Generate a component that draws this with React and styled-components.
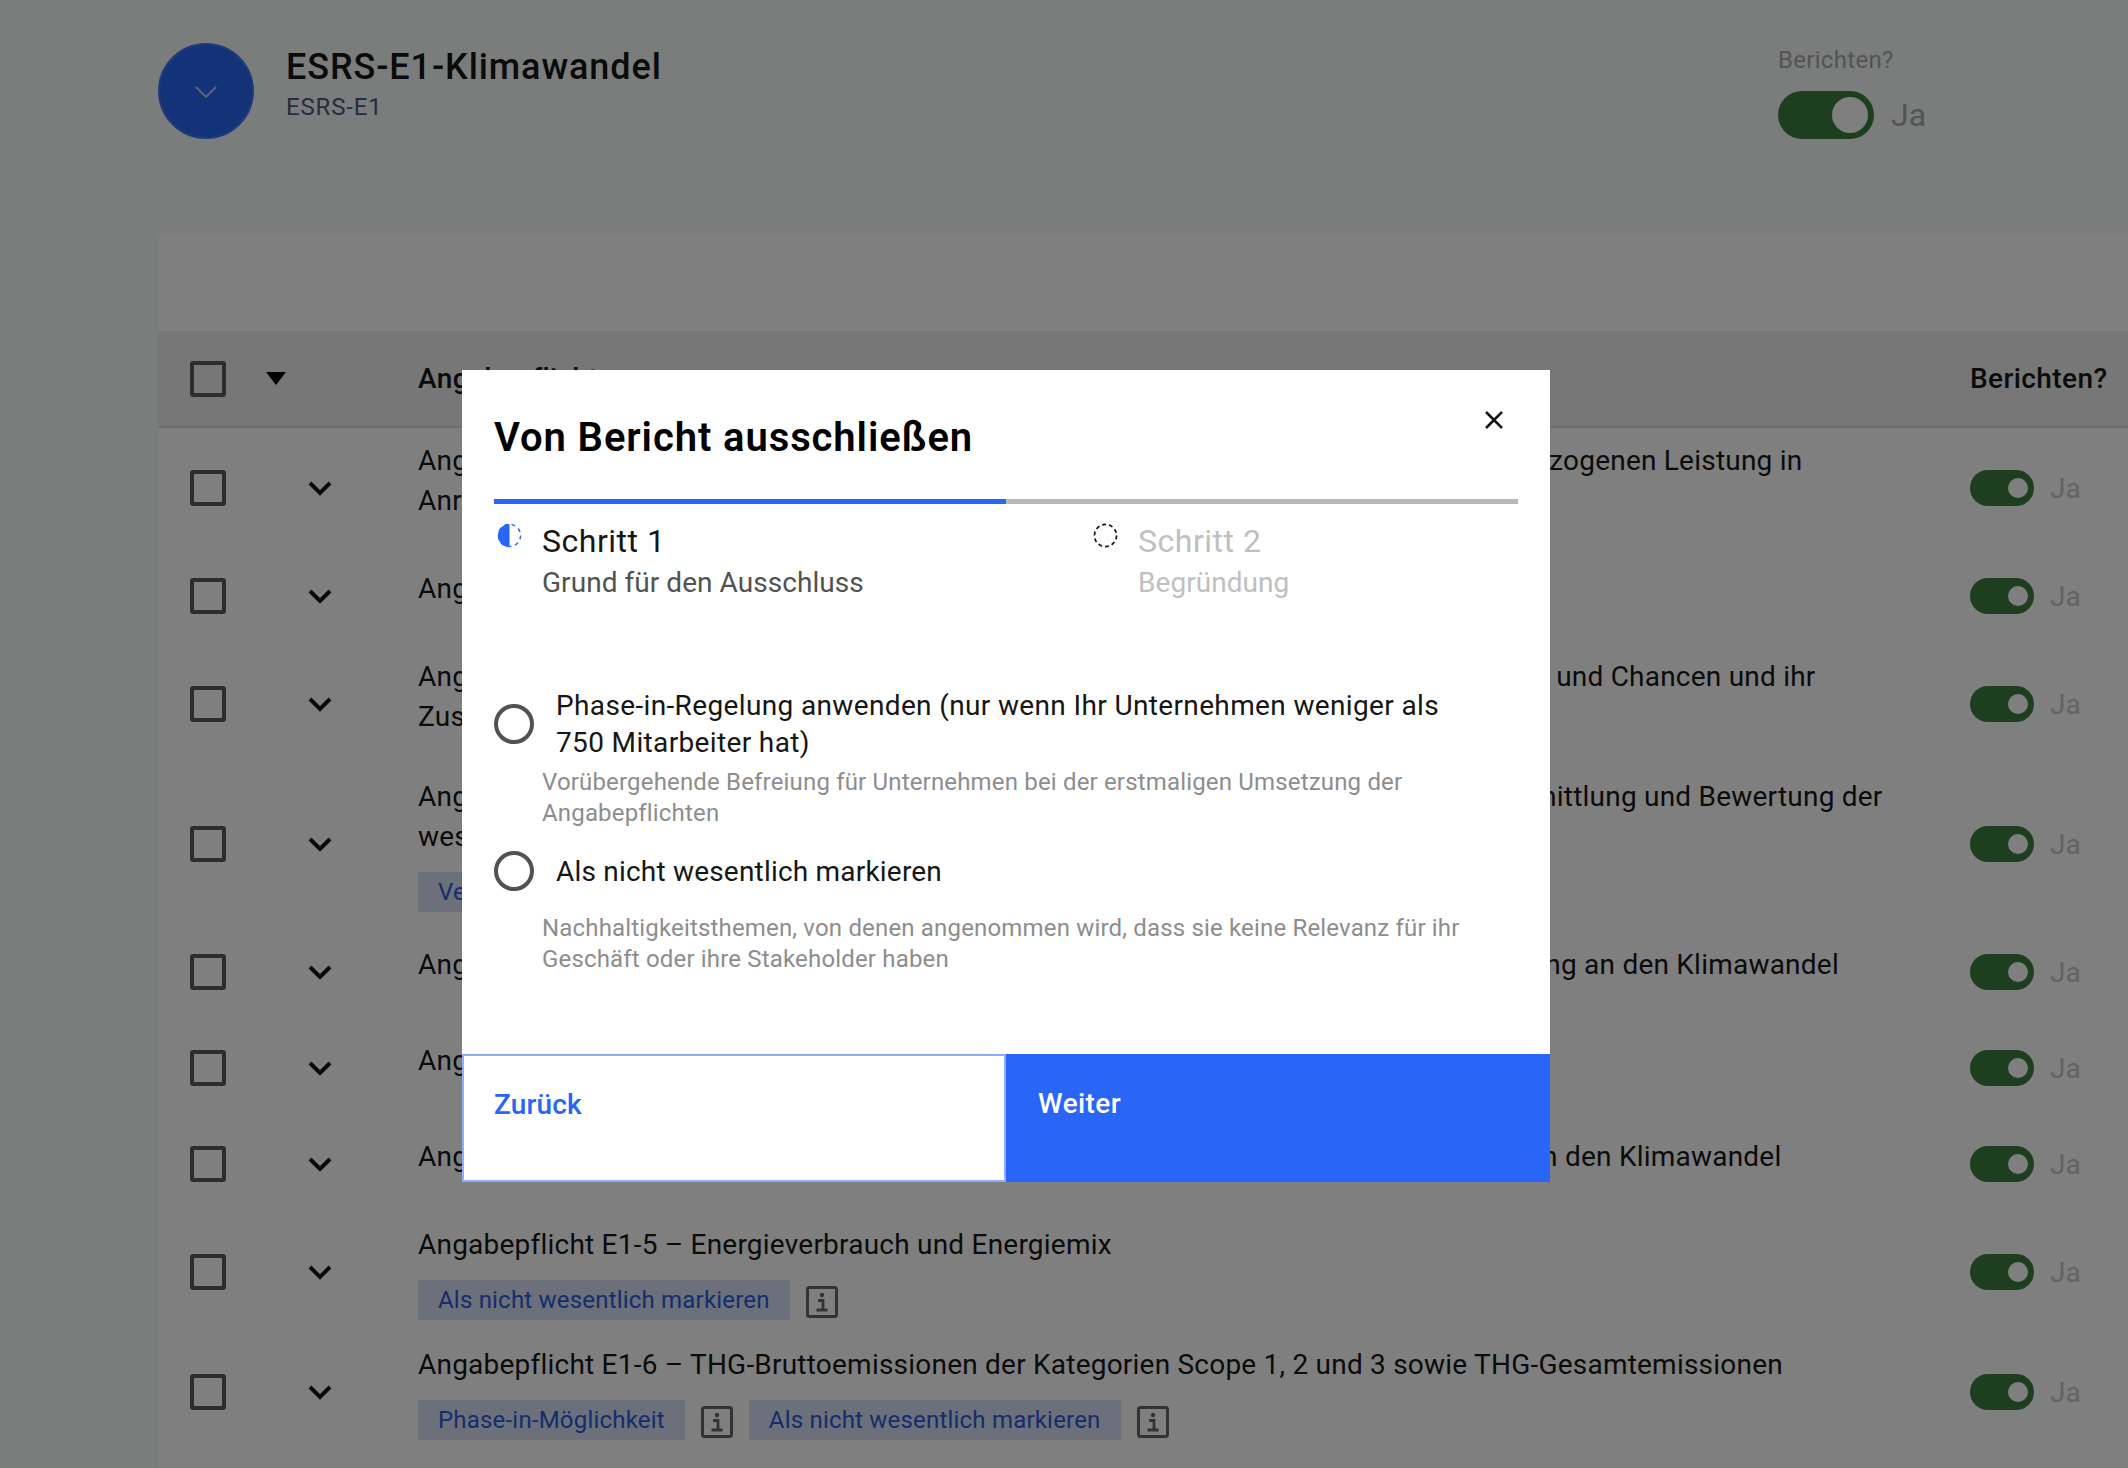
import React from "react"
import styled, { createGlobalStyle } from "styled-components"

const rows = [
  {
    lines: [
      "Angabepflicht im Zusammenhang mit dem ESRS 2 GOV-3 – Berücksichtigung der klimabezogenen Leistung in",
      "Anreizsysteme",
    ],
  },
  { lines: ["Angabepflicht E1-1 – Übergangsplan für den Klimaschutz"] },
  {
    lines: [
      "Angabepflicht im Zusammenhang mit ESRS 2 SBM-3 - Wesentliche Auswirkungen, Risiken und Chancen und ihr",
      "Zusammenspiel mit Strategie und Geschäftsmodell",
    ],
  },
  {
    lines: [
      "Angabepflicht im Zusammenhang mit ESRS 2 IRO-1 – Beschreibung der Verfahren zur Ermittlung und Bewertung der",
      "wesentlichen klimabezogenen Auswirkungen, Risiken und Chancen",
    ],
    tags: ["Verpflichtend"],
  },
  {
    lines: [
      "Angabepflicht E1-2 - Konzepte im Zusammenhang mit dem Klimaschutz und der Anpassung an den Klimawandel",
    ],
  },
  { lines: ["Angabepflicht E1-3 – Maßnahmen und Mittel im Zusammenhang mit den Klimastrategien"] },
  {
    lines: [
      "Angabepflicht E1-4 - Ziele im Zusammenhang mit dem Klimaschutz und der Anpassung an den Klimawandel",
    ],
  },
  {
    lines: ["Angabepflicht E1-5 – Energieverbrauch und Energiemix"],
    tags: ["Als nicht wesentlich markieren"],
  },
  {
    lines: [
      "Angabepflicht E1-6 – THG-Bruttoemissionen der Kategorien Scope 1, 2 und 3 sowie THG-Gesamtemissionen",
    ],
    tags: ["Phase-in-Möglichkeit", "Als nicht wesentlich markieren"],
  },
]

const Chevron = () => (
  <svg width="24" height="15" viewBox="0 0 24 15" fill="none">
    <path d="M2 2l10 10L22 2" stroke="#161616" strokeWidth="4" />
  </svg>
)

const InfoIcon = () => (
  <InfoSvg width="32" height="32" viewBox="0 0 32 32" fill="none">
    <rect x="1.500" y="1.500" width="29" height="29" rx="2" stroke="#666" strokeWidth="3" />
    <circle cx="16" cy="9" r="2.200" fill="#666" />
    <path d="M12 14.500h5V24M10.500 24h11" stroke="#666" strokeWidth="2.800" />
  </InfoSvg>
)

const Toggle = ({ large }) => (
  <ToggleWrap $large={large}>
    <Track $large={large}>
      <Knob $large={large} />
    </Track>
    <ToggleLabel $large={large}>Ja</ToggleLabel>
  </ToggleWrap>
)

const Row = ({ row }) => (
  <TableRow>
    <Checkbox />
    <ChevronCell>
      <Chevron />
    </ChevronCell>
    <TitleCell>
      <RowTitle>
        {row.lines.map(line => (
          <div key={line}>{line}</div>
        ))}
      </RowTitle>
      {row.tags && (
        <Tags>
          {row.tags.map(tag => (
            <React.Fragment key={tag}>
              <Tag>{tag}</Tag>
              {tag !== "Verpflichtend" && <InfoIcon />}
            </React.Fragment>
          ))}
        </Tags>
      )}
    </TitleCell>
    <Toggle />
  </TableRow>
)

const App = () => {
  return (
    <>
      <GlobalStyle />
      <Page>
        <TopBar>
          <Circle>
            <svg width="22" height="12" viewBox="0 0 22 12" fill="none">
              <path d="M1 1l10 10L21 1" stroke="#fff" strokeWidth="2" />
            </svg>
          </Circle>
          <TopText>
            <PageTitle>ESRS-E1-Klimawandel</PageTitle>
            <PageSub>ESRS-E1</PageSub>
          </TopText>
          <ReportBox>
            <ReportLabel>Berichten?</ReportLabel>
            <Toggle large />
          </ReportBox>
        </TopBar>

        <Panel>
          <Toolbar />
          <HeadRow>
            <Checkbox />
            <Caret />
            <HeadText>Angabepflicht</HeadText>
            <HeadText>Berichten?</HeadText>
          </HeadRow>
          {rows.map(row => (
            <Row key={row.lines[0]} row={row} />
          ))}
        </Panel>
      </Page>

      <Overlay>
        <Modal>
          <CloseButton>
            <svg width="20" height="20" viewBox="0 0 20 20" fill="none">
              <path d="M2 2l16 16M18 2L2 18" stroke="#161616" strokeWidth="2.500" />
            </svg>
          </CloseButton>
          <ModalTitle>Von Bericht ausschließen</ModalTitle>

          <Progress>
            <Step>
              <svg width="25" height="25" viewBox="0 0 26 26" fill="none">
                <path d="M13 1a12 12 0 0 0 0 24z" fill="#2965f7" />
                <circle cx="13" cy="13" r="11.500" stroke="#2965f7" strokeWidth="1.500" strokeDasharray="4 4" />
              </svg>
              <StepText>
                <StepName>Schritt 1</StepName>
                <StepSub>Grund für den Ausschluss</StepSub>
              </StepText>
            </Step>
            <Step>
              <svg width="25" height="25" viewBox="0 0 26 26" fill="none">
                <circle cx="13" cy="13" r="11.500" stroke="#161616" strokeWidth="1.800" strokeDasharray="4 3.200" />
              </svg>
              <StepText>
                <StepName $muted>Schritt 2</StepName>
                <StepSub $muted>Begründung</StepSub>
              </StepText>
            </Step>
          </Progress>

          <Options>
            <Option>
              <Radio />
              <OptionLabel>
                Phase-in-Regelung anwenden (nur wenn Ihr Unternehmen weniger als
                <br />
                750 Mitarbeiter hat)
              </OptionLabel>
            </Option>
            <OptionHelp>
              Vorübergehende Befreiung für Unternehmen bei der erstmaligen Umsetzung der
              <br />
              Angabepflichten
            </OptionHelp>
            <Option $second>
              <Radio />
              <OptionLabel $second>Als nicht wesentlich markieren</OptionLabel>
            </Option>
            <OptionHelp $second>
              Nachhaltigkeitsthemen, von denen angenommen wird, dass sie keine Relevanz für ihr
              <br />
              Geschäft oder ihre Stakeholder haben
            </OptionHelp>
          </Options>

          <Footer>
            <BackButton>Zurück</BackButton>
            <NextButton>Weiter</NextButton>
          </Footer>
        </Modal>
      </Overlay>
    </>
  )
}

const GlobalStyle = createGlobalStyle`
  html, body {
    margin: 0;
    height: 100%;
    overflow: hidden;
    background: #f6faf8;
    font-family: "Roboto", "Liberation Sans", sans-serif;
    color: #161616;
  }
  * {
    box-sizing: border-box;
  }
`

const Page = styled.main`
  display: flex;
  flex-direction: column;
  height: 1468px;
  overflow: hidden;
  padding-left: 158px;
`

const TopBar = styled.header`
  display: flex;
  flex: none;
  height: 235px;
  padding-top: 43px;
`

const Circle = styled.div`
  width: 96px;
  height: 96px;
  border-radius: 50%;
  background: #2864f0;
  border: 2px solid #3f78f5;
  display: flex;
  align-items: center;
  justify-content: center;
  svg {
    opacity: 0.65;
    margin-top: 2px;
  }
`

const TopText = styled.div`
  margin-left: 32px;
  padding-top: 2px;
`

const PageTitle = styled.h1`
  margin: 0;
  font-size: 36px;
  line-height: 44px;
  font-weight: 500;
  letter-spacing: 0.9px;
`

const PageSub = styled.div`
  margin-top: 2px;
  font-size: 24px;
  line-height: 32px;
  color: #4d5a7a;
  letter-spacing: 0.85px;
`

const ReportBox = styled.div`
  width: 200px;
  margin-left: auto;
  margin-right: 150px;
  margin-top: 1px;
`

const ReportLabel = styled.div`
  font-size: 24px;
  line-height: 32px;
  color: #a8a8a8;
  margin-bottom: 15px;
  letter-spacing: 0.3px;
`

const ToggleWrap = styled.div`
  display: flex;
  align-items: center;
  gap: ${p => (p.$large ? "17px" : "16px")};
`

const Track = styled.div`
  position: relative;
  width: ${p => (p.$large ? "96px" : "64px")};
  height: ${p => (p.$large ? "48px" : "36px")};
  border-radius: 24px;
  background: #3c7d40;
`

const Knob = styled.div`
  position: absolute;
  right: 6px;
  top: ${p => (p.$large ? "6px" : "8px")};
  width: ${p => (p.$large ? "36px" : "20px")};
  height: ${p => (p.$large ? "36px" : "20px")};
  border-radius: 50%;
  background: #fff;
`

const ToggleLabel = styled.span`
  font-size: ${p => (p.$large ? "32px" : "28px")};
  color: ${p => (p.$large ? "#a8a8a8" : "#c6c6c6")};
`

const Panel = styled.section`
  flex: 1;
  background: #fff;
`

const Toolbar = styled.div`
  height: 96px;
`

const HeadRow = styled.div`
  display: grid;
  grid-template-columns: 36px 40px 1fr 158px;
  align-items: center;
  height: 97px;
  padding-left: 32px;
  background: #eeeeee;
  border-bottom: 2px solid #d8d8d8;
  & > :nth-child(3) {
    margin-left: 152px;
  }
`

const Caret = styled.div`
  margin-left: 40px;
  width: 0;
  height: 0;
  border-left: 10px solid transparent;
  border-right: 10px solid transparent;
  border-top: 13px solid #000;
`

const HeadText = styled.div`
  font-size: 28px;
  font-weight: 500;
  letter-spacing: 0.4px;
  white-space: nowrap;
`

const TableRow = styled.div`
  display: grid;
  grid-template-columns: 36px 82px 1fr 158px;
  align-items: center;
  padding: 13px 0 13px 32px;
  min-height: 96px;
`

const Checkbox = styled.div`
  width: 36px;
  height: 36px;
  border: 4px solid #5a5a5a;
  border-radius: 3px;
`

const ChevronCell = styled.div`
  display: flex;
  justify-content: flex-end;
  width: 106px;
  margin-right: -24px;
`

const TitleCell = styled.div`
  padding-left: 110px;
`

const RowTitle = styled.div`
  font-size: 28px;
  line-height: 40px;
  white-space: nowrap;
  margin-bottom: 14px;
  letter-spacing: 0.22px;
`

const Tags = styled.div`
  display: flex;
  align-items: center;
  gap: 16px;
  margin: 15px 0 -1px;
`

const Tag = styled.span`
  height: 40px;
  padding: 0 20px;
  background: #d6e0f5;
  color: #2a5ad8;
  font-size: 24px;
  line-height: 40px;
  white-space: nowrap;
  letter-spacing: 0.2px;
`

const InfoSvg = styled.svg`
  margin-top: 4px;
`

const Overlay = styled.div`
  position: fixed;
  inset: 0;
  background: rgba(0, 0, 0, 0.5);
  padding: 370px 0 0 462px;
`

const Modal = styled.div`
  position: relative;
  width: 1088px;
  height: 812px;
  background: #fff;
  padding-top: 44px;
  display: flex;
  flex-direction: column;
`

const CloseButton = styled.div`
  position: absolute;
  top: 40px;
  right: 46px;
  line-height: 0;
`

const ModalTitle = styled.h2`
  margin: 0 32px;
  font-size: 40px;
  line-height: 48px;
  font-weight: 600;
  letter-spacing: 0.9px;
  color: #000;
`

const Progress = styled.div`
  margin: 37px 32px 0;
  display: grid;
  grid-template-columns: 596px 1fr;
  height: 103px;
  background:
    linear-gradient(#2965f7, #2965f7) left top / 512px 5px no-repeat,
    linear-gradient(#b8b8b8, #b8b8b8) left top / 100% 5px no-repeat;
`

const Step = styled.div`
  display: flex;
  padding: 24px 0 0 3px;
  gap: 20px;
  svg {
    flex: none;
  }
`

const StepText = styled.div`
  margin-top: -2px;
`

const StepName = styled.div`
  font-size: 32px;
  line-height: 40px;
  color: ${p => (p.$muted ? "#c0c0c0" : "#161616")};
  letter-spacing: 0.5px;
`

const StepSub = styled.div`
  margin-top: 2px;
  font-size: 28px;
  line-height: 40px;
  color: ${p => (p.$muted ? "#c0c0c0" : "#525252")};
  letter-spacing: 0.05px;
`

const Options = styled.div`
  margin: 85px 32px 0;
`

const Option = styled.label`
  display: flex;
  align-items: center;
  gap: 22px;
  margin-top: ${p => (p.$second ? "22px" : "0")};
`

const Radio = styled.span`
  flex: none;
  width: 40px;
  height: 40px;
  border-radius: 50%;
  border: 4px solid #525252;
`

const OptionLabel = styled.span`
  font-size: 28px;
  line-height: 37px;
  letter-spacing: ${p => (p.$second ? "0.2px" : "0.36px")};
`

const OptionHelp = styled.div`
  margin: ${p => (p.$second ? "22px" : "6px")} 0 0 48px;
  font-size: 24px;
  line-height: 31px;
  color: #8d8d8d;
  letter-spacing: 0.17px;
`

const Footer = styled.div`
  margin-top: auto;
  display: grid;
  grid-template-columns: 1fr 1fr;
  height: 128px;
`

const BackButton = styled.div`
  background: #fff;
  border: 2px solid #8fadfb;
  color: #2965f7;
  font-size: 28px;
  font-weight: 500;
  letter-spacing: 0.15px;
  padding: 32px 0 0 30px;
`

const NextButton = styled.div`
  background: #2965f7;
  color: #fff;
  font-size: 28px;
  font-weight: 500;
  letter-spacing: 0.4px;
  padding: 33px 0 0 32px;
`

export default App
